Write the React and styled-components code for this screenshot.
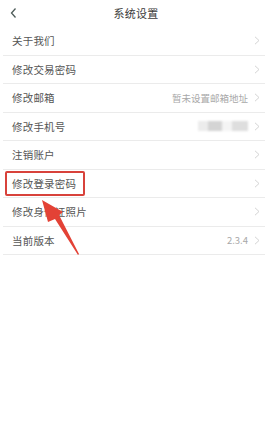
import React from "react";
import styled, { createGlobalStyle } from "styled-components";

const Global = createGlobalStyle`
  html, body { margin: 0; padding: 0; background: #fff; }
  body { font-family: "Noto Sans CJK SC", "Noto Sans", sans-serif; }
`;

const Page = styled.div`
  position: relative;
  width: 270px;
  height: 445px;
  background: #fff;
  overflow: hidden;
`;

const Header = styled.div`
  height: 27px;
  display: flex;
  align-items: center;
  justify-content: center;
  position: relative;
`;

const Back = styled.div`
  position: absolute;
  left: 9px;
  top: 7px;
  width: 10px;
  height: 12px;
  display: flex;
`;

const Title = styled.div`
  font-size: 11px;
  color: #3a3a3a;
  letter-spacing: 0.3px;
  margin-left: 2px;
  margin-top: -1px;
`;

const List = styled.div`
  padding: 0 5px 0 3px;
`;

const Row = styled.div`
  height: 27.5px;
  border-bottom: 1px solid #ebebeb;
  display: flex;
  align-items: center;
  padding-left: 9px;
  padding-right: 5px;
  position: relative;
`;

const Label = styled.div`
  flex: 1;
  font-size: 10.5px;
  color: #555;
  letter-spacing: 0.2px;
`;

const Value = styled.div`
  font-size: 9.5px;
  color: #a8a8a8;
  margin-right: 6px;
`;

const Blur = styled.div`
  display: flex;
  margin-right: 6px;
  filter: blur(1.2px);
`;

const Block = styled.div`
  width: ${(p) => p.w}px;
  height: 10px;
  background: ${(p) => p.c};
`;

const Highlight = styled.div`
  position: absolute;
  left: 2px;
  top: 1px;
  width: 76px;
  height: 21px;
  border: 2px solid #d8423b;
  border-radius: 2px;
`;

const Arrow = styled.svg`
  position: absolute;
  left: 0;
  top: 0;
  pointer-events: none;
`;

const Chevron = () => (
  <svg width="6" height="9" viewBox="0 0 6 9">
    <path d="M1 0.8 L5 4.5 L1 8.2" fill="none" stroke="#cfcfcf" strokeWidth="0.9" />
  </svg>
);

const items = [
  { label: "关于我们" },
  { label: "修改交易密码" },
  { label: "修改邮箱", value: "暂未设置邮箱地址" },
  { label: "修改手机号", blur: true },
  { label: "注销账户" },
  { label: "修改登录密码", highlight: true },
  { label: "修改身份证照片" },
  { label: "当前版本", value: "2.3.4" },
];

export default function App() {
  return (
    <Page>
      <Global />
      <Header>
        <Back>
          <svg width="10" height="12" viewBox="0 0 10 12">
            <path d="M6.5 1.5 L2.5 6 L6.5 10.5" fill="none" stroke="#4d5b58" strokeWidth="1.3" />
          </svg>
        </Back>
        <Title>系统设置</Title>
      </Header>
      <List>
        {items.map((it) => (
          <Row key={it.label}>
            {it.highlight && <Highlight />}
            <Label>{it.label}</Label>
            {it.value && <Value>{it.value}</Value>}
            {it.blur && (
              <Blur>
                <Block w={10} c="#ececec" />
                <Block w={14} c="#d4d4d4" />
                <Block w={10} c="#f4f4f4" />
                <Block w={16} c="#dedede" />
              </Blur>
            )}
            <Chevron />
          </Row>
        ))}
      </List>
      <Arrow width="270" height="445" viewBox="0 0 270 445">
        <path
          d="M42 200 L63 212 L59 215 L79 254 L78 255 L55 219 L48 222 Z"
          fill="#e34236"
        />
      </Arrow>
    </Page>
  );
}
